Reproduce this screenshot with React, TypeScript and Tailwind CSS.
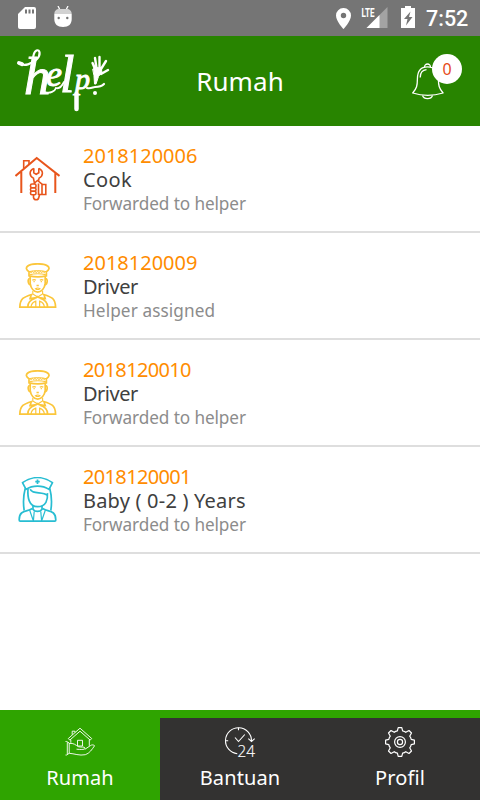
import type { ReactNode } from "react";
import clsx from "clsx";

type HelperKind = "cook" | "driver" | "nurse";

interface Order {
  id: string;
  title: string;
  status: string;
  kind: HelperKind;
  idClass?: string;
  titleClass?: string;
  statusClass?: string;
}

const orders: Order[] = [
  { id: "2018120006", title: "Cook", status: "Forwarded to helper", kind: "cook", titleClass: "tracking-[0.4px]" },
  { id: "2018120009", title: "Driver", status: "Helper assigned", kind: "driver", titleClass: "tracking-[-0.5px]", statusClass: "tracking-[0.1px]" },
  { id: "2018120010", title: "Driver", status: "Forwarded to helper", kind: "driver", idClass: "tracking-[-0.65px]", titleClass: "tracking-[-0.5px]" },
  { id: "2018120001", title: "Baby ( 0-2 ) Years", status: "Forwarded to helper", kind: "nurse", idClass: "tracking-[-0.65px]", titleClass: "tracking-[0.2px]" },
];

const CookIcon = () => (
  <svg viewBox="0 0 45 45" className="size-[45px]" fill="none" stroke="#e8551c" strokeWidth="1.6">
    <path d="M.5 20 21.7 2l22.8 18M6.3 16v21M40.3 17v20" strokeWidth="2" />
    <path d="M8.7 12V4.7H14V8" />
    <path d="M18.8 12.4c-5 2.2-4.7 7.5-.4 9.7l1.2 5.8M23.8 12.4c5 2.2 4.5 7.7.3 9.7l-.6 2.7" />
    <path d="M18.8 12.2v4.5l2.4 1.6 2.6-1.6v-4.5" />
    <rect x="15.5" y="28" width="5.5" height="3.7" rx="1.5" />
    <rect x="15.5" y="31.7" width="5.5" height="3.6" rx="1.5" />
    <rect x="15.5" y="35.3" width="5.5" height="3.4" rx="1.5" />
    <path d="M19 27.5l3.5-3 4.5 3.6M23.5 27.5V39M27 27.5V39M27 28.5h3.8v10H23.5" />
    <path d="M18.5 39v2.5c.7 3 4.7 3 5.3 0L24.7 38" />
  </svg>
);

const DriverIcon = () => (
  <svg viewBox="0 0 45 45" className="size-[45px]" fill="none" stroke="#fbc63b" strokeWidth="1.7">
    <path d="M14 8.8C8 4.7 13 .8 22.7.8S37.4 4.7 31.4 8.8v4.1c-5.5 1.4-11.5 1.4-17.4 0z" />
    <path d="M14 8.7c5.8-1.4 11.6-1.4 17.4 0M14.5 11.8c5.6-1.4 11-1.4 16.5 0" strokeWidth="1" />
    <path d="M15 8.2l1 2 1.4-2.3 1.3 2.2 1.3-2.2 1.3 2.2 1.4-2.2 1.3 2.2 1.3-2.2 1.3 2.2 1.4-2.2 1.3 2.3 1-2" strokeWidth=".8" />
    <path d="M15.2 13.5v7.2c.6 4.8 4 8.4 7.5 8.4s6.9-3.6 7.5-8.4v-7.2" />
    <path d="M14.9 15.5c-2.4-.2-2.3 5.5.5 6.5M30.5 15.5c2.4-.2 2.3 5.5-.5 6.5" />
    <path d="M17.3 17.2c1.2-.8 2.5-.8 3.5 0M24.8 17.2c1.2-.8 2.5-.8 3.5 0M18.5 18.6h1.2M25.7 18.6h1.2M21.5 22.5h2.3" strokeWidth="1.3" />
    <path d="M20.5 25.7c1.3-.8 3-.8 4.4 0-1.3.9-3.1.9-4.4 0zM17.8 28v3l4.9 3 4.9-3v-3" strokeWidth="1.1" />
    <path d="M17.5 31.3C9 34 5 35 4.8 44.2h35.8c-.2-9.2-4.2-10.2-12.7-12.9" />
    <path d="M16.2 32l-1.1 3.5 6.2-.8 1.4-1.2 1.5 1.2 6 .8-1.1-3.5M12.8 44c0-4.6 3.2-7.6 7.7-8.8M32.6 44c0-4.6-3.2-7.6-7.7-8.8" />
    <path d="M16 44c.4-3.2 2-5 4.8-5.8V44M29.4 44c-.4-3.2-2-5-4.8-5.8V44" strokeWidth="1.2" />
  </svg>
);

const NurseIcon = () => (
  <svg viewBox="0 0 45 45" className="size-[45px]" fill="none" stroke="#27bdd2" strokeWidth="1.7" strokeLinejoin="round">
    <path d="M11 12.4 7.5 5.6C17-1 28-1 37.5 5.6L34 12.4C27.5 8 17.5 8 11 12.4z" />
    <path d="M22.5 2.5v4.4M20.3 4.7h4.4" />
    <path d="M10.2 11.5C8.5 18 8 26 9.2 33.5M34.8 11.5c1.7 6.5 2.2 14.5 1 22" />
    <path d="M13 12c-.6 8 .8 17.7 9.5 17.7S33 22.5 32.4 16.2" />
    <path d="M15.3 12.2c1 5.3 12.6 2.3 17 6" />
    <path d="M18 28.7v3.5c1.8 3 7.2 3 9 0v-3.5" />
    <path d="M17.5 31.5C12 35 4 32.6 4.2 43c0 .8.3 1.1 1 1.1h34.6c.7 0 1-.3 1-1.1 0-10.4-7.8-8-13.3-11.5" />
    <path d="M14.6 33l3.8 11M30.4 33l-3.8 11M19.2 34.5 18.4 44M25.8 34.5l.8 9.5" strokeWidth="1.2" />
  </svg>
);

const HomeIcon = () => (
  <svg viewBox="0 0 30 30" className="size-[30px]" fill="none" stroke="white" strokeWidth=".9" strokeLinejoin="round">
    <path d="M3.3 11.5 15 1.2l11.7 10.3-1.5 1.6L15 4.2 4.8 13.1z" />
    <path d="M7.2 7.7V4.2h2.7v1.2M5.8 12.8v3M24.3 12.8v6" />
    <rect x="12.5" y="13.3" width="5" height="5.7" />
    <path d="M.5 14.5h1.2L4.2 16v10.3L1.6 28H.5M2.3 15.2v12.3" />
    <path d="M4.2 16.5c4.5-.8 6.3 1.6 9.3 3.2 2 .9 6-.4 6.5 1.3.4 2-5 1.5-8.5 1.2" />
    <path d="M20 22.2l5.3-3.5c1.6-1.3 3.6-.8 4.3 0-2.4 3.5-5.2 7.8-9.3 9C14.5 29 9 26.5 4.2 26.3" />
  </svg>
);

const ClockIcon = () => (
  <svg viewBox="0 0 30 30" className="size-[30px] overflow-visible" fill="none" stroke="white" strokeWidth="1.1">
    <path d="M12.3 26.7A13 13 0 1 1 26.5 13.7M23.3 11.7l3.2 2.8 3.2-2.8" />
    <path d="M10 10.5l3.5 4 6.3-7M13.5.8v2.4M.5 13.7h2.7" />
    <text x="12.5" y="30" fill="white" stroke="white" strokeWidth=".2" fontSize="17" textLength="17.5" lengthAdjust="spacingAndGlyphs" className="font-['Open_Sans',sans-serif] font-light">24</text>
  </svg>
);

const GearIcon = () => (
  <svg viewBox="0 0 30 30" className="size-[30px]" fill="none" stroke="white" strokeWidth="1.2" strokeLinejoin="round">
    <path d="M13.2.6h3.6l.8 3.2q2 .4 3.2 1.5l3.2-1.8L26.5 6l-1.8 3.2q1.1 1.3 1.5 3.2l3.2.8v3.6l-3.2.8q-.4 2-1.5 3.2l1.8 3.2-2.5 2.5-3.2-1.8q-1.3 1.1-3.2 1.5l-.8 3.2h-3.6l-.8-3.2q-2-.4-3.2-1.5L6 26.5 3.5 24l1.8-3.2q-1.1-1.3-1.5-3.2l-3.2-.8v-3.6l3.2-.8q.4-2 1.5-3.2L3.5 6 6 3.5l3.2 1.8q1.3-1.1 3.2-1.5z" />
    <circle cx="15" cy="15" r="5.4" />
    <circle cx="15" cy="15" r="2.6" />
  </svg>
);

const BellIcon = () => (
  <svg viewBox="0 0 32 37" className="h-[37px] w-8" fill="none" stroke="white" strokeWidth="1.3" strokeLinejoin="round">
    <path d="M12.5 4.5c-.3-4.7 6.3-4.7 6 0M15.5 3.8C8 3.8 5.4 9 5.4 16c0 6.5-.7 9.500-4.700 14 9 2.800 21 2.800 30.400 0-4-4.500-4.700-7.500-4.700-14 0-7-3.400-12.200-10.900-12.200z" />
    <path d="M8.2 14.5c0-4.5 2.4-7.4 6.3-7.8M10.5 32.5c1.5 4.2 8.6 4.2 10 0" />
  </svg>
);

const Logo = () => (
  <svg viewBox="0 0 95 66" className="h-[66px] w-[95px] overflow-visible" fill="none" stroke="white" strokeLinecap="round">
    <text fill="white" strokeWidth="1" className="font-['Liberation_Serif',serif] italic">
      <tspan x="7" y="46" fontSize="53">h</tspan>
      <tspan x="29" y="38" fontSize="36">e</tspan>
      <tspan x="43" y="44" fontSize="52">l</tspan>
      <tspan x="58" y="41" fontSize="30">p</tspan>
    </text>
    {/* flourishes */}
    <path d="M2 15c5 4 13 1 18-4 4-4 3-10-.5-8.5-3 1.5-3.5 6-3.5 10" strokeWidth="2.2" />
    <path d="M2 15l3 1.2" strokeWidth="4" />
    <path d="M28 44c5 2 10-1 11-4 3 1 6-2 8-6" strokeWidth="1.8" />
    <path d="M59.500 46v15" strokeWidth="4.5" />
    <path d="M70 40c4 1 6-1 8-1s6 0 9-3" strokeWidth="2.2" />
    {/* waving hand */}
    <path d="M76 21l3-1.5 5 .5 1 4-3.500 4.500-2.500 7.500h-1.500l-.5-8z" fill="white" strokeWidth="1" />
    <path d="M78 21l-2.500-6M79.500 20l-1.500-10M82.500 20V9M84 21l5-8M84 26l7-4" strokeWidth="2.4" />
    <circle cx="78" cy="45" r="2" fill="white" stroke="none" />
  </svg>
);

const helperIcons: Record<HelperKind, ReactNode> = {
  cook: <CookIcon />,
  driver: <DriverIcon />,
  nurse: <NurseIcon />,
};

const tabs = [
  { label: "Rumah", icon: <HomeIcon />, active: true },
  { label: "Bantuan", icon: <ClockIcon />, active: false },
  { label: "Profil", icon: <GearIcon />, active: false },
];

const StatusBar = () => (
  <div className="flex h-9 items-center bg-[#757575] pr-3 pl-[18px] text-white">
    <svg viewBox="0 0 18 22" className="h-[22px] w-[18px]">
      <path d="M7 0h9q2 0 2 2v18q0 2-2 2H2q-2 0-2-2V7z" fill="white" />
      <path d="M8 2.5v4M11.5 2.5v4M15 2.5v4" stroke="#757575" strokeWidth="2" />
    </svg>
    <svg viewBox="0 0 18 21" className="ml-[18px] h-[21px] w-[18px] -translate-y-0.5">
      <path d="M4 0l2 4M14 0l-2 4" stroke="white" strokeWidth="1.3" />
      <path d="M.3 8h17.4v5c0 5-3 8-8.7 8S.3 18 .3 13z" fill="white" />
      <path d="M.3 8c0-3 2-5 5-5h7.400c3 0 5 2 5 5z" fill="#d2d2d2" />
      <circle cx="4.700" cy="12" r="1.2" fill="#757575" />
      <circle cx="13.3" cy="12" r="1.2" fill="#757575" />
    </svg>
    <div className="flex-1" />
    <svg viewBox="0 0 15 21" className="h-[21px] w-[15px]">
      <path fill="white" fillRule="evenodd" d="M7.500 0A7.400 7.400 0 0 0 0 7.400C0 13 7.500 21 7.500 21S15 13 15 7.400A7.400 7.400 0 0 0 7.500 0zm0 4.800a2.700 2.700 0 1 1 0 5.400 2.700 2.700 0 0 1 0-5.400z" />
    </svg>
    <svg viewBox="0 0 27 21" className="ml-[10px] h-[21px] w-[27px] -translate-y-px overflow-visible">
      <path d="M26.500 0v21H5.500z" fill="#a3a3a3" />
      <path d="M18.500 8v13h-13z" fill="white" />
      <path d="M0 0h14.500v11H0z" fill="#757575" />
      <text x="0.5" y="9.5" fill="white" fontSize="13" textLength="13" lengthAdjust="spacingAndGlyphs" className="font-[Roboto,sans-serif] font-bold">LTE</text>
    </svg>
    <svg viewBox="0 0 14 22" className="ml-[13px] h-[22px] w-3.5 -translate-y-px">
      <path d="M4 0h6v2h4v20H0V2h4z" fill="white" />
      <path d="M9.500 5.500 3 13h3.500L5 19.500 11.500 11H8z" fill="#757575" />
    </svg>
    <span className="ml-[11px] w-[42px] pt-0.5 font-[Roboto,sans-serif] text-[21.5px] leading-8 font-medium">7:52</span>
  </div>
);

const Header = () => (
  <header className="flex h-[90px] items-center justify-between bg-[#288400] px-[17px] text-white">
    <div className="w-[120px]">
      <Logo />
    </div>
    <h1 className="text-[26px] leading-9 tracking-[0.1px]">Rumah</h1>
    <div className="relative flex w-[120px] justify-end pr-[19px]">
      <BellIcon />
      <span className="absolute -top-[9px] right-px flex size-[30px] items-center justify-center rounded-full bg-white text-base text-[#e64a19]">0</span>
    </div>
  </header>
);

const OrderRow = ({ order }: { order: Order }) => (
  <li className="flex h-[107px] border-b-2 border-[#dedede] pl-[15px]">
    <div className="mt-[30px] w-[68px]">{helperIcons[order.kind]}</div>
    <div className="mt-[18px]">
      <p className={clsx("text-xl leading-6 text-[#ff8c00]", order.idClass)}>{order.id}</p>
      <p className={clsx("text-xl leading-6 text-[#404040]", order.titleClass)}>{order.title}</p>
      <p className={clsx("text-[17.2px] leading-6 text-[#8c8c8c]", order.statusClass ?? "tracking-[-0.1px]")}>{order.status}</p>
    </div>
  </li>
);

const App = () => (
  <div className="flex h-[800px] w-[480px] flex-col overflow-hidden bg-white font-['Noto_Sans',sans-serif]">
    <StatusBar />
    <Header />
    <ul className="flex-1">
      {orders.map((order) => (
        <OrderRow key={order.id} order={order} />
      ))}
    </ul>
    <nav className="grid h-[90px] grid-cols-3 bg-[#2fa400] pt-2 text-white">
      {tabs.map((tab) => (
        <div
          key={tab.label}
          className={clsx("flex flex-col items-center pt-[9px]", tab.active ? "bg-[#2fa400]" : "bg-[#333231]")}
        >
          {tab.icon}
          <span className="mt-[7px] text-xl leading-7 tracking-[0.1px]">{tab.label}</span>
        </div>
      ))}
    </nav>
  </div>
);

export default App;
